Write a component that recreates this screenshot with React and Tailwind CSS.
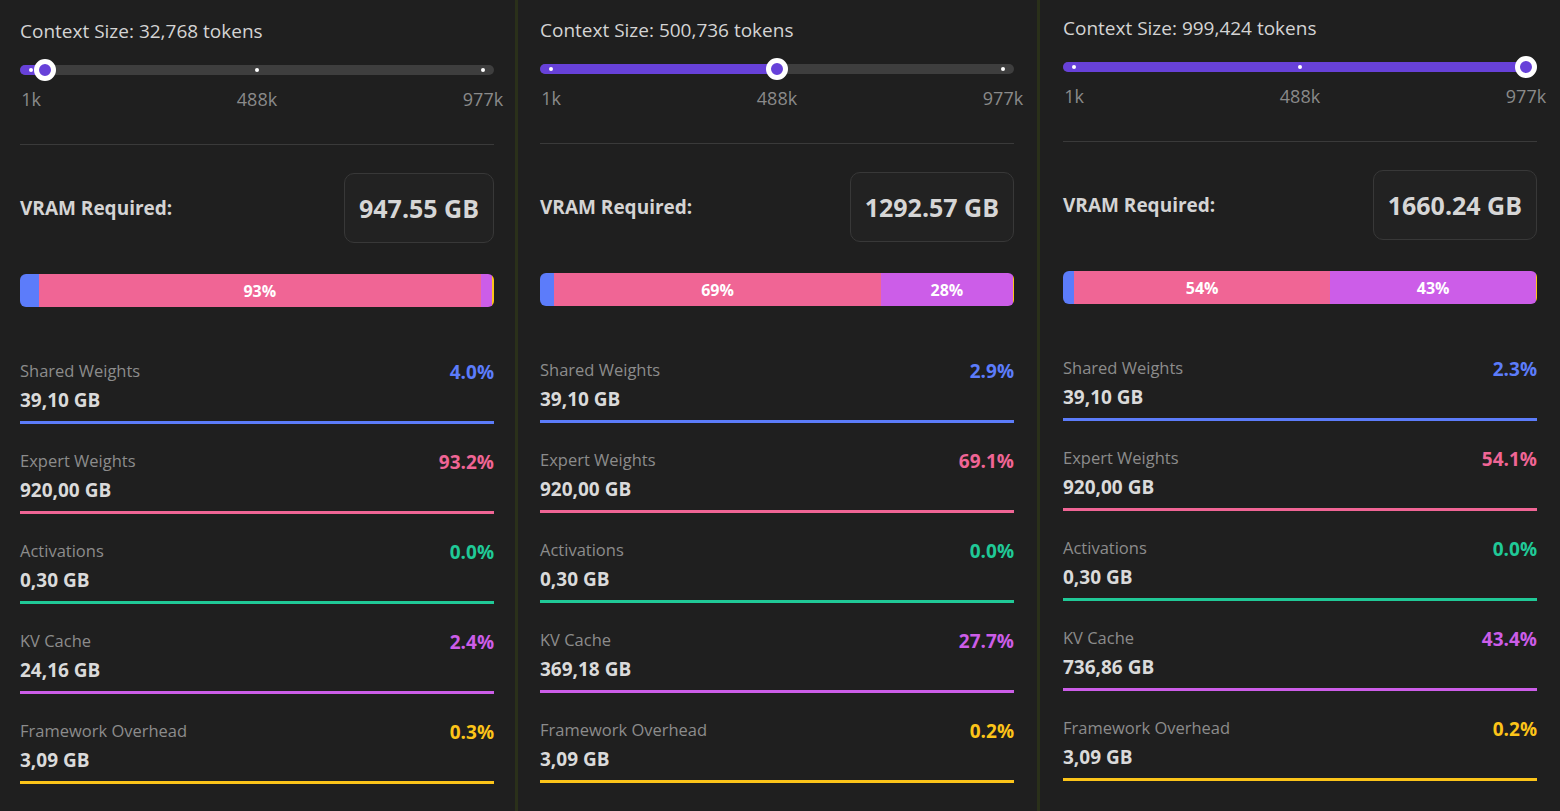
import React from "react";

const COLORS = {
  blue: "#5c7cfa",
  pink: "#f06595",
  teal: "#20c997",
  grape: "#cc5de8",
  yellow: "#fcc419",
};

const panels = [
  {
    ctx: "32,768",
    value: 32768,
    vram: "947.55 GB",
    wrap: "w-[515px] pl-[20px] pr-[21px] pt-[19px]",
    metrics: [
      ["Shared Weights", "39,10 GB", "4.0%", 4.0, "blue"],
      ["Expert Weights", "920,00 GB", "93.2%", 93.2, "pink"],
      ["Activations", "0,30 GB", "0.0%", 0.0, "teal"],
      ["KV Cache", "24,16 GB", "2.4%", 2.4, "grape"],
      ["Framework Overhead", "3,09 GB", "0.3%", 0.3, "yellow"],
    ],
  },
  {
    ctx: "500,736",
    value: 500736,
    vram: "1292.57 GB",
    wrap: "w-[519px] pl-[22px] pr-[23px] pt-[18px]",
    metrics: [
      ["Shared Weights", "39,10 GB", "2.9%", 2.9, "blue"],
      ["Expert Weights", "920,00 GB", "69.1%", 69.1, "pink"],
      ["Activations", "0,30 GB", "0.0%", 0.0, "teal"],
      ["KV Cache", "369,18 GB", "27.7%", 27.7, "grape"],
      ["Framework Overhead", "3,09 GB", "0.2%", 0.2, "yellow"],
    ],
  },
  {
    ctx: "999,424",
    value: 999424,
    vram: "1660.24 GB",
    wrap: "w-[520px] pl-[23px] pr-[23px] pt-[16px]",
    metrics: [
      ["Shared Weights", "39,10 GB", "2.3%", 2.3, "blue"],
      ["Expert Weights", "920,00 GB", "54.1%", 54.1, "pink"],
      ["Activations", "0,30 GB", "0.0%", 0.0, "teal"],
      ["KV Cache", "736,86 GB", "43.4%", 43.4, "grape"],
      ["Framework Overhead", "3,09 GB", "0.2%", 0.2, "yellow"],
    ],
  },
];

const MIN = 1024;
const MAX = 999424;

function Slider({ value }) {
  const p = (value - MIN) / (MAX - MIN);
  const pos = `calc(11px + ${p} * (100% - 22px))`;
  const marks = [0, 0.5, 1];
  return (
    <div>
      <div className="relative h-[22px]">
        <div className="absolute left-0 right-0 top-[6px] h-[10px] rounded-full bg-[#3e3e3e]" />
        <div
          className="absolute left-0 top-[6px] h-[10px] rounded-full bg-[#6741d9]"
          style={{ width: pos }}
        />
        {marks.map((m) => (
          <div
            key={m}
            className="absolute top-[9px] h-[4px] w-[4px] -translate-x-1/2 rounded-full bg-white"
            style={{ left: `calc(11px + ${m} * (100% - 22px))` }}
          />
        ))}
        <div
          className="absolute top-0 h-[22px] w-[22px] -translate-x-1/2 rounded-full border-[5px] border-white bg-[#6741d9]"
          style={{ left: pos }}
        />
      </div>
      <div className="relative mt-[8px] h-[20px] text-[18px] leading-[20px] text-[#8a8a8a]">
        {["1k", "488k", "977k"].map((l, i) => (
          <span
            key={l}
            className="absolute top-0 -translate-x-1/2 whitespace-nowrap"
            style={{ left: `calc(11px + ${marks[i]} * (100% - 22px))` }}
          >
            {l}
          </span>
        ))}
      </div>
    </div>
  );
}

function StackBar({ metrics }) {
  const order = ["blue", "pink", "teal", "grape", "yellow"];
  return (
    <div className="flex h-[33px] w-full overflow-hidden rounded-[6px]">
      {order.map((c) => {
        const m = metrics.find((x) => x[4] === c);
        const pct = m[3];
        if (pct <= 0) return null;
        return (
          <div
            key={c}
            className="flex h-full items-center justify-center text-[16px] font-bold text-white"
            style={{ width: `${pct}%`, backgroundColor: COLORS[c] }}
          >
            {pct >= 10 ? `${Math.round(pct)}%` : ""}
          </div>
        );
      })}
    </div>
  );
}

function Metric({ m }) {
  const [label, val, pctText, , color] = m;
  return (
    <div className="mt-[27px] first:mt-0">
      <div className="flex items-start justify-between">
        <div>
          <div className="text-[16.5px] leading-[20px] text-[#8c8c8c]">{label}</div>
          <div className="mt-[7px] text-[19px] font-bold leading-[24px] text-[#dadada]">{val}</div>
        </div>
        <div
          className="mt-[-1px] text-[19px] font-bold leading-[24px]"
          style={{ color: COLORS[color] }}
        >
          {pctText}
        </div>
      </div>
      <div className="mt-[9px] h-[3px] w-full" style={{ backgroundColor: COLORS[color] }} />
    </div>
  );
}

function Panel({ p }) {
  return (
    <div className={`h-full shrink-0 bg-[#1f1f1f] ${p.wrap}`}>
      <div className="text-[19px] leading-[24px] text-[#d4d4d4]">
        Context Size: {p.ctx} tokens
      </div>
      <div className="mt-[16px]">
        <Slider value={p.value} />
      </div>
      <div className="mt-[35px] h-px bg-[#3a3a3a]" />
      <div className="mt-[28px] flex items-center justify-between">
        <div className="text-[19px] font-bold text-[#d4d4d4]">VRAM Required:</div>
        <div className="rounded-[10px] border border-[#383838] bg-[#222222] px-[14px] py-[17px] text-[25px] font-bold leading-[34px] text-[#d6d6d6]">
          {p.vram}
        </div>
      </div>
      <div className="mt-[31px]">
        <StackBar metrics={p.metrics} />
      </div>
      <div className="mt-[54px]">
        {p.metrics.map((m) => (
          <Metric key={m[0]} m={m} />
        ))}
      </div>
    </div>
  );
}

export default function App() {
  return (
    <div
      className="flex h-[811px] w-[1560px] overflow-hidden bg-[#1f1f1f]"
      style={{ fontFamily: '"Open Sans", "Noto Sans", sans-serif' }}
    >
      <Panel p={panels[0]} />
      <div className="h-full w-[3px] shrink-0 bg-[#2a301a]" />
      <Panel p={panels[1]} />
      <div className="h-full w-[3px] shrink-0 bg-[#2a301a]" />
      <Panel p={panels[2]} />
    </div>
  );
}
